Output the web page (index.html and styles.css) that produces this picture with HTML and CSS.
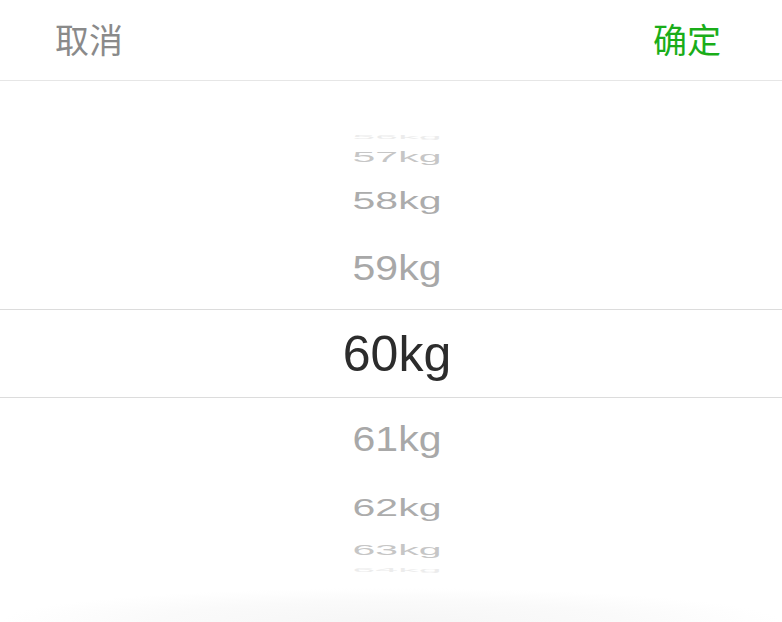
FILE: index.html
```html
<!DOCTYPE html>
<html lang="zh-CN">
<head>
<meta charset="utf-8">
<title>体重选择</title>
<link rel="stylesheet" href="styles.css">
</head>
<body>
<div class="sheet">
  <header class="bar">
    <span class="btn cancel">取消</span>
    <span class="btn ok">确定</span>
  </header>
  <div class="picker">
    <div class="row r4"><span>56kg</span></div>
    <div class="row r3"><span>57kg</span></div>
    <div class="row r2"><span>58kg</span></div>
    <div class="row r1"><span>59kg</span></div>
    <div class="row sel"><span>60kg</span></div>
    <div class="row r1"><span>61kg</span></div>
    <div class="row r2"><span>62kg</span></div>
    <div class="row r3"><span>63kg</span></div>
    <div class="row r4"><span>64kg</span></div>
  </div>
  <div class="foot"></div>
</div>
</body>
</html>
```
FILE: styles.css
```css
html, body {
  margin: 0;
  padding: 0;
  background: #ffffff;
}
.sheet {
  width: 782px;
  height: 622px;
  display: flex;
  flex-direction: column;
  overflow: hidden;
}
.bar {
  height: 80px;
  flex: none;
  display: flex;
  align-items: center;
  justify-content: space-between;
  padding: 0 61px 0 55px;
  border-bottom: 1px solid #e6e6e6;
}
.btn {
  font-family: "Noto Sans CJK SC", "Noto Sans", sans-serif;
  font-size: 34px;
  line-height: 1;
  margin-top: -2px;
}
.cancel { color: #8a8a8a; }
.ok { color: #1aad19; }
.picker {
  flex: none;
  display: flex;
  flex-direction: column;
  padding-top: 52px;
}
.row {
  display: flex;
  align-items: center;
  justify-content: center;
  padding-left: 12px;
  font-family: "Liberation Sans", Arial, sans-serif;
  font-size: 41px;
  line-height: 1;
  color: #a8a8a8;
  overflow: hidden;
}
.row span {
  display: block;
}
.sel {
  height: 87px;
  border-top: 1px solid #dcdcdc;
  border-bottom: 1px solid #dcdcdc;
  font-size: 50px;
  color: #2c2c2c;
}
.r1 { height: 82px; }
.r1 span { transform: scaleY(0.84); }
.r2 { height: 54px; }
.r2 span { transform: scaleY(0.6); color: #acacac; }
.r3 { height: 32px; }
.r3 span { transform: scaleY(0.34); color: #c6c6c6; }
.r4 { height: 8px; }
.r4 span { transform: scaleY(0.12); color: #ececec; }
.foot {
  flex: 1;
  background: radial-gradient(ellipse 50% 34px at 50% 100%, #f6f6f6 0%, #fafafa 60%, #ffffff 100%);
}
```
